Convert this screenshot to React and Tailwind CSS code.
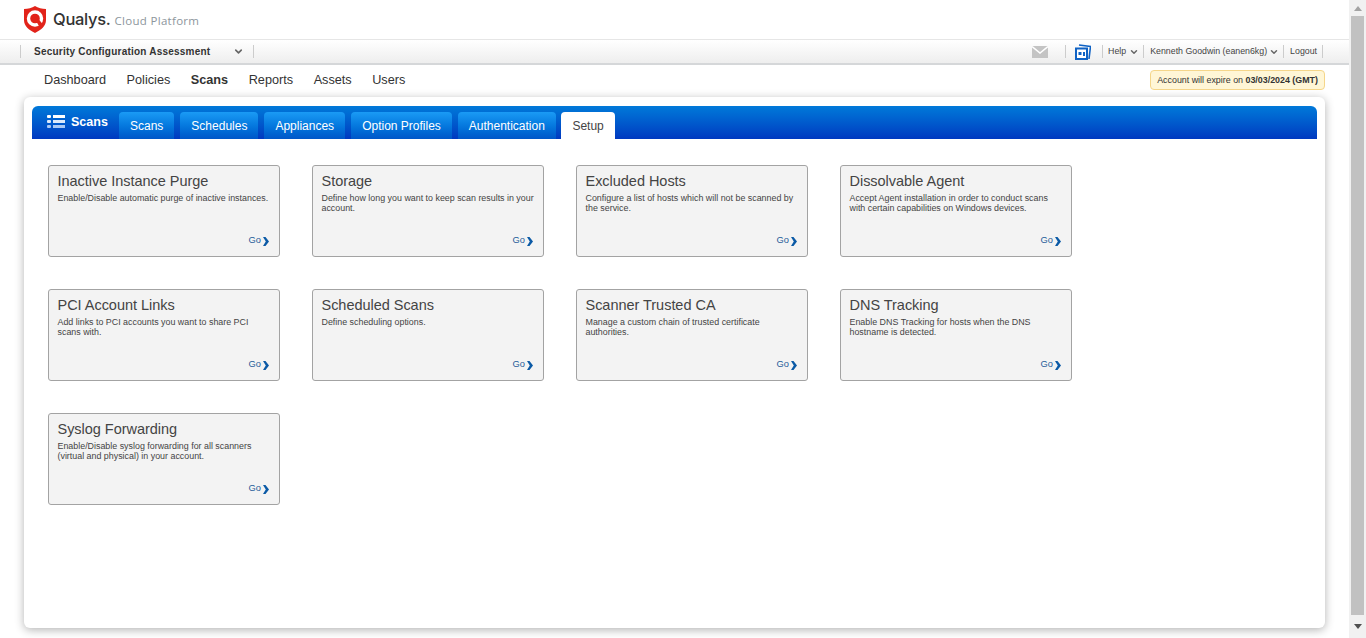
import { ChevronDown } from "lucide-react"

const tabs = ["Scans", "Schedules", "Appliances", "Option Profiles", "Authentication"]

const tiles = [
  { title: "Inactive Instance Purge", text: "Enable/Disable automatic purge of inactive instances." },
  { title: "Storage", text: "Define how long you want to keep scan results in your account." },
  { title: "Excluded Hosts", text: "Configure a list of hosts which will not be scanned by the service." },
  { title: "Dissolvable Agent", text: "Accept Agent installation in order to conduct scans with certain capabilities on Windows devices." },
  { title: "PCI Account Links", text: "Add links to PCI accounts you want to share PCI scans with." },
  { title: "Scheduled Scans", text: "Define scheduling options." },
  { title: "Scanner Trusted CA", text: "Manage a custom chain of trusted certificate authorities." },
  { title: "DNS Tracking", text: "Enable DNS Tracking for hosts when the DNS hostname is detected." },
  { title: "Syslog Forwarding", text: "Enable/Disable syslog forwarding for all scanners (virtual and physical) in your account." },
]

function Shield() {
  return (
    <svg width="24" height="27" viewBox="0 0 24 27">
      <path d="M1 3 C5 3 9 2 12 0 C15 2 19 3 23 3 L23 14 C23 20 18 24 12 27 C6 24 1 20 1 14 Z" fill="#e2231a" />
      <circle cx="12" cy="12.5" r="6.5" fill="none" stroke="#fff" strokeWidth="3.4" />
      <path d="M12.5 14 L16.5 21 L20 18.5 L15.5 13 Z" fill="#e2231a" />
    </svg>
  )
}

function Tile({ title, text }) {
  return (
    <div className="relative h-[92px] w-[232px] rounded-[3px] border border-[#a3a3a3] bg-[#f3f3f3] pl-[8.5px] pr-[6.5px] pt-[6px]">
      <div className="text-[14.5px] leading-[19px] tracking-[-0.03px] text-[#444]">{title}</div>
      <p className="mt-[2px] text-[8.9px] leading-[10px] text-[#444]">{text}</p>
      <div className="absolute bottom-[10px] right-[10px] flex items-center gap-[2px] text-[9.3px] leading-[11px] text-[#1f5c99]">
        Go
        <svg width="6" height="9" viewBox="0 0 6 9" className="mt-[1px]">
          <polygon points="0,0 2.5,0 6,4.5 2.5,9 0,9 2.8,4.5" fill="#0b5aa6" />
        </svg>
      </div>
    </div>
  )
}

function Sep() {
  return <span className="h-[13px] w-px bg-[#ccc]" />
}

export default function App() {
  return (
    <div className="flex h-screen overflow-hidden bg-white font-['Liberation_Sans',Arial,sans-serif]">
      <div className="flex min-w-0 flex-1 flex-col">
        <header className="flex h-[40px] items-center border-b border-[#e6e6e6] pl-[23px]">
          <Shield />
          <span className="ml-[6px] font-['Inter',sans-serif] text-[16.5px] font-medium tracking-[-0.3px] text-[#333]">
            Qualys.
          </span>
          <span className="ml-[4px] mt-[2px] font-['Open_Sans',sans-serif] text-[11.5px] tracking-[0.3px] text-[#8d969c]">
            Cloud Platform
          </span>
        </header>

        <div className="flex h-[25px] items-center border-b-2 border-[#d5d7d9] bg-gradient-to-b from-white to-[#eeeeee] pl-[20px] pr-[26px] text-[8.8px] text-[#444]">
          <Sep />
          <span className="ml-[13px] w-[199px] text-[10px] font-bold tracking-[0.22px] text-[#333]">
            Security Configuration Assessment
          </span>
          <ChevronDown size={11} strokeWidth={3.5} className="text-[#666]" />
          <span className="ml-[9px] h-[13px] w-px bg-[#ccc]" />
          <svg width="16" height="12" viewBox="0 0 16 12" className="ml-auto mr-px">
            <rect width="16" height="12" fill="#c4c4c4" />
            <path d="M0 0.5 L8 7 L16 0.5" fill="none" stroke="#fff" strokeWidth="1.5" />
          </svg>
          <span className="ml-[16px] h-[13px] w-px bg-[#ccc]" />
          <svg width="16" height="16" viewBox="0 0 16 16" className="ml-[9px] mr-px">
            <path d="M4 1 L15.5 2.5 L14 15" fill="none" stroke="#0f62c4" strokeWidth="1.6" />
            <rect x="1" y="4.5" width="11" height="10.5" fill="#fff" stroke="#0f62c4" strokeWidth="2" />
            <rect x="3.5" y="8" width="3" height="3" fill="#0f62c4" />
            <rect x="8" y="8" width="2" height="4" fill="#0f62c4" />
          </svg>
          <span className="ml-[10px] h-[13px] w-px bg-[#ccc]" />
          <span className="ml-[5px]">Help</span>
          <ChevronDown size={10} strokeWidth={3.5} className="ml-[3px] text-[#666]" />
          <span className="ml-[4px] h-[13px] w-px bg-[#ccc]" />
          <span className="ml-[6px]">Kenneth Goodwin (eanen6kg)</span>
          <ChevronDown size={10} strokeWidth={3.5} className="ml-[2px] text-[#666]" />
          <span className="ml-[4px] h-[13px] w-px bg-[#ccc]" />
          <span className="ml-[6px]">Logout</span>
          <span className="ml-[5px] h-[13px] w-px bg-[#ccc]" />
        </div>

        <nav className="flex h-[32px] items-center justify-between pl-[44px] pr-[24px] text-[12.7px] text-[#333]">
          <div className="flex gap-[20.5px]">
            <span>Dashboard</span>
            <span>Policies</span>
            <span className="font-bold">Scans</span>
            <span>Reports</span>
            <span>Assets</span>
            <span>Users</span>
          </div>
          <div className="mb-[2px] rounded-[4px] border border-[#f5d68a] bg-[#fff6d6] px-[6px] py-[3px] text-[8.9px] leading-[12px] text-[#333]">
            Account will expire on <b>03/03/2024 (GMT)</b>
          </div>
        </nav>

        <main className="mx-[24px] mb-[10px] flex-1 rounded-[6px] bg-white px-[8px] pt-[9px] shadow-[0_2px_10px_rgba(0,0,0,0.3)]">
          <div className="flex h-[33px] items-end rounded-t-[6px] bg-gradient-to-b from-[#0079d9] to-[#0038c0] pl-[15px]">
            <div className="flex h-full w-[72px] items-center gap-[6px] text-[12.5px] font-bold text-white">
              <svg width="18" height="15" viewBox="0 0 18 15" className="mb-[2px]">
                <g fill="#fff">
                  <rect x="0" y="1" width="4" height="3" rx="1" />
                  <rect x="6" y="1" width="12" height="3" />
                </g>
                <g fill="#dce9fb">
                  <rect x="0" y="6" width="4" height="3" rx="1" />
                  <rect x="6" y="6" width="12" height="3" />
                </g>
                <g fill="#a9c8f5">
                  <rect x="0" y="11" width="4" height="3" rx="1" />
                  <rect x="6" y="11" width="12" height="3" />
                </g>
              </svg>
              Scans
            </div>
            <div className="flex gap-[6px]">
              {tabs.map((t) => (
                <span key={t} className="flex h-[27px] items-center rounded-t-[4px] bg-gradient-to-b from-[#1a9bf5] to-[#0056c8] px-[11px] text-[12px] text-white">
                  {t}
                </span>
              ))}
              <span className="-ml-px flex h-[27px] items-center rounded-t-[4px] bg-white px-[11.5px] text-[12px] text-[#444]">Setup</span>
            </div>
          </div>

          <div className="grid grid-cols-[repeat(4,232px)] gap-[32px] pl-[16px] pt-[26px]">
            {tiles.map((t) => (
              <Tile key={t.title} title={t.title} text={t.text} />
            ))}
          </div>
        </main>
      </div>

      <aside className="flex w-[17px] flex-col bg-[#f1f1f1]">
        <div className="flex h-[16px] items-center justify-center">
          <span className="h-0 w-0 border-x-[4px] border-b-[5px] border-x-transparent border-b-[#a3a3a3]" />
        </div>
        <div className="ml-[2px] mr-[2px] flex-1 bg-[#c1c1c1]" />
        <div className="flex h-[23px] items-center justify-center">
          <span className="h-0 w-0 border-x-[4px] border-t-[5px] border-x-transparent border-t-[#505050]" />
        </div>
      </aside>
    </div>
  )
}
